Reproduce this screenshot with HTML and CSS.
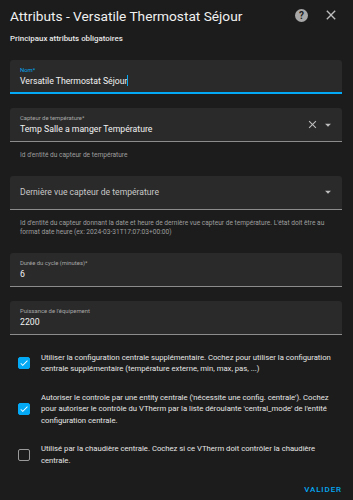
FILE: index.html
```html
<!DOCTYPE html>
<html lang="fr">
<head>
    <meta charset="UTF-8">
    <meta name="viewport" content="width=device-width, initial-scale=1.0">
    <title>Attributs - Versatile Thermostat Séjour</title>
    <link rel="stylesheet" href="styles.css">
</head>
<body>
    <div class="dialog">
        <div class="dialog-header">
            <h1 class="dialog-title">Attributs - Versatile Thermostat Séjour</h1>
            <div class="header-actions">
                <span class="help-icon">?</span>
                <svg class="close-icon" viewBox="0 0 24 24"><path d="M19 6.41L17.59 5 12 10.59 6.41 5 5 6.41 10.59 12 5 17.59 6.41 19 12 13.41 17.59 19 19 17.59 13.41 12z"/></svg>
            </div>
        </div>

        <p class="section-title">Principaux attributs obligatoires</p>

        <div class="field focused">
            <span class="field-label">Nom*</span>
            <span class="field-value">Versatile Thermostat Séjour<span class="caret"></span></span>
        </div>

        <div class="field with-icons">
            <div class="field-body">
                <span class="field-label">Capteur de température*</span>
                <span class="field-value">Temp Salle a manger Température</span>
            </div>
            <svg class="clear-icon" viewBox="0 0 24 24"><path d="M19 6.41L17.59 5 12 10.59 6.41 5 5 6.41 10.59 12 5 17.59 6.41 19 12 13.41 17.59 19 19 17.59 13.41 12z"/></svg>
            <svg class="arrow-icon" viewBox="0 0 24 24"><path d="M7 10l5 5 5-5z"/></svg>
        </div>
        <p class="helper">Id d'entité du capteur de température</p>

        <div class="field with-icons">
            <span class="field-placeholder">Dernière vue capteur de température</span>
            <svg class="arrow-icon" viewBox="0 0 24 24"><path d="M7 10l5 5 5-5z"/></svg>
        </div>
        <p class="helper">Id d'entité du capteur donnant la date et heure de dernière vue capteur de température. L'état doit être au format date heure (ex: 2024-03-31T17:07:03+00:00)</p>

        <div class="field">
            <span class="field-label">Durée du cycle (minutes)*</span>
            <span class="field-value">6</span>
        </div>

        <div class="field">
            <span class="field-label">Puissance de l'équipement</span>
            <span class="field-value">2200</span>
        </div>

        <div class="checks">
            <label class="check-row">
                <span class="checkbox checked"><svg viewBox="0 0 24 24"><path d="M9 16.17L4.83 12l-1.42 1.41L9 19 21 7l-1.41-1.41z"/></svg></span>
                <span class="check-text">Utiliser la configuration centrale supplémentaire. Cochez pour utiliser la configuration centrale supplémentaire (température externe, min, max, pas, ...)</span>
            </label>
            <label class="check-row">
                <span class="checkbox checked"><svg viewBox="0 0 24 24"><path d="M9 16.17L4.83 12l-1.42 1.41L9 19 21 7l-1.41-1.41z"/></svg></span>
                <span class="check-text">Autoriser le controle par une entity centrale ('nécessite une config. centrale'). Cochez pour autoriser le contrôle du VTherm par la liste déroulante 'central_mode' de l'entité configuration centrale.</span>
            </label>
            <label class="check-row">
                <span class="checkbox"></span>
                <span class="check-text">Utilisé par la chaudière centrale. Cochez si ce VTherm doit contrôler la chaudière centrale.</span>
            </label>
        </div>

        <div class="dialog-actions">
            <button class="submit">Valider</button>
        </div>
    </div>
</body>
</html>
```

FILE: styles.css
```css
:root {
    --ha-bg: #1c1c1c;
    --ha-field: #2a2a2a;
    --ha-primary: #03a9f4;
    --ha-text: #e1e1e1;
    --ha-muted: #9e9e9e;
}

body {
    margin: 0;
    background: var(--ha-bg);
    font-family: Roboto, "Noto Sans", sans-serif;
    color: var(--ha-text);
}

.dialog {
    width: 353px;
    height: 500px;
    box-sizing: border-box;
    padding: 0 11px 0 10px;
}

.dialog-header {
    display: flex;
    align-items: center;
    justify-content: space-between;
    height: 30px;
}

.dialog-title {
    margin: 0;
    font-size: 13.7px;
    font-weight: 400;
    color: #f0f0f0;
    padding-top: 1px;
}

.header-actions {
    display: flex;
    align-items: center;
    gap: 15px;
}

.help-icon {
    width: 13px;
    height: 13px;
    border-radius: 50%;
    background: #a8a8a8;
    color: var(--ha-bg);
    font-size: 10px;
    font-weight: 700;
    line-height: 13px;
    text-align: center;
}

.close-icon {
    width: 16px;
    height: 16px;
    fill: #bdbdbd;
    margin-right: 3px;
}

.section-title {
    margin: 3px 0 0;
    font-size: 7.9px;
    font-weight: 500;
    color: #e8e8e8;
    line-height: 12px;
}

.field {
    margin-top: 14px;
    height: 33px;
    background: var(--ha-field);
    border-radius: 3px 3px 0 0;
    border-bottom: 1px solid #8c8c8c;
    padding: 0 10px;
    display: flex;
    flex-direction: column;
    justify-content: center;
}

.field.focused {
    height: 32px;
    border-bottom: 2px solid var(--ha-primary);
    margin-top: 15px;
}

.field-label {
    font-size: 5.9px;
    color: #a6a6a6;
    line-height: 9px;
    margin-top: 1px;
}

.focused .field-label {
    color: var(--ha-primary);
}

.field-value {
    font-size: 8.7px;
    line-height: 13px;
    color: #f2f2f2;
}

.caret {
    display: inline-block;
    width: 1px;
    height: 11px;
    background: var(--ha-primary);
    vertical-align: -2px;
}

.field.with-icons {
    flex-direction: row;
    align-items: center;
}

.field-body {
    flex: 1;
    display: flex;
    flex-direction: column;
}

.field-placeholder {
    flex: 1;
    font-size: 8.6px;
    color: #c8c8c8;
}

.clear-icon {
    width: 13px;
    height: 13px;
    fill: #bdbdbd;
    margin-right: 2px;
}

.arrow-icon {
    width: 14px;
    height: 14px;
    fill: #bdbdbd;
    margin-right: -3px;
}

.helper {
    margin: 0;
    padding: 9px 10px 0;
    font-size: 6.6px;
    line-height: 9.5px;
    color: var(--ha-muted);
}

.helper + .field {
    margin-top: 15px;
}

.checks {
    margin-top: 17px;
    display: flex;
    flex-direction: column;
    gap: 17px;
}

.check-row {
    display: flex;
    align-items: center;
    gap: 11px;
    padding-left: 8px;
}

.checkbox {
    flex: none;
    width: 12px;
    height: 12px;
    box-sizing: border-box;
    border-radius: 2px;
    border: 1.5px solid #9a9a9a;
    display: flex;
    align-items: center;
    justify-content: center;
}

.checkbox.checked {
    background: var(--ha-primary);
    border-color: var(--ha-primary);
}

.checkbox svg {
    width: 10px;
    height: 10px;
    fill: #ffffff;
}

.check-text {
    font-size: 7.7px;
    line-height: 11.5px;
    color: #e6e6e6;
}

.dialog-actions {
    display: flex;
    justify-content: flex-end;
    margin-top: 19px;
}

.submit {
    background: none;
    border: none;
    padding: 0;
    font-family: Roboto, "Noto Sans", sans-serif;
    font-size: 8px;
    font-weight: 500;
    letter-spacing: 0.9px;
    text-transform: uppercase;
    color: var(--ha-primary);
}
```
